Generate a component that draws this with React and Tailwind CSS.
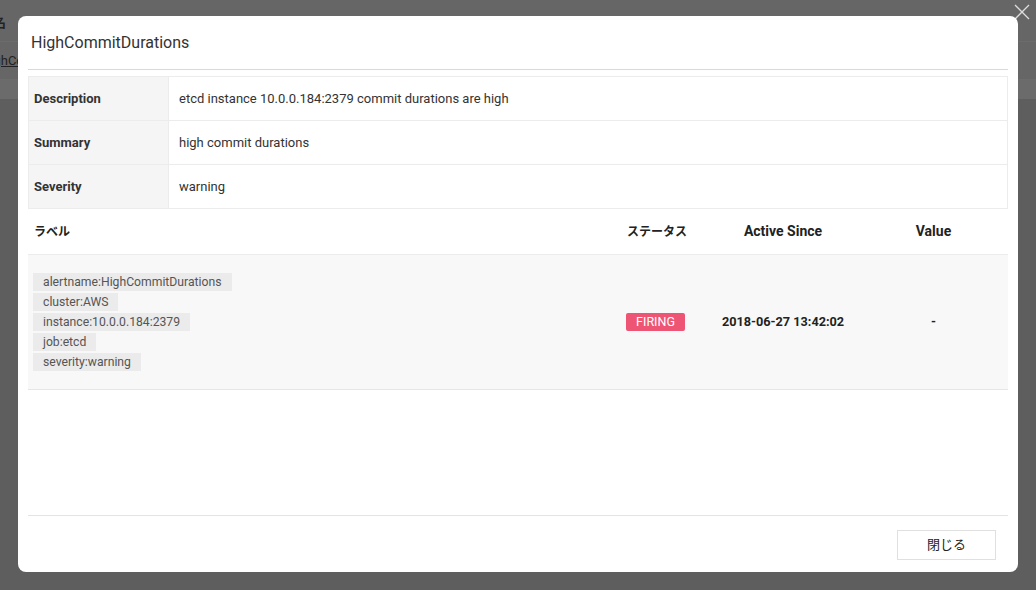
import React from "react";

const details = [
  { name: "Description", value: "etcd instance 10.0.0.184:2379 commit durations are high" },
  { name: "Summary", value: "high commit durations" },
  { name: "Severity", value: "warning" },
];

const labels = [
  "alertname:HighCommitDurations",
  "cluster:AWS",
  "instance:10.0.0.184:2379",
  "job:etcd",
  "severity:warning",
];

const jp = { fontFamily: 'Roboto, "Noto Sans CJK JP", sans-serif' };

export default function App() {
  return (
    <div className="relative w-[1036px] h-[590px] overflow-hidden bg-[#5e5e5e]" style={jp}>
      {/* page behind the dim overlay */}
      <div className="bg-[#666666]">
        <div className="h-[42px] border-b border-[#6c6c6c] flex items-end pb-[9px] text-[13px] font-bold text-[#222]">
          <span className="w-[230px] -ml-[7px]">名</span>
          <span className="w-[110px]">ラベル</span>
          <span className="w-[110px]">発生時刻</span>
          <span>状態</span>
        </div>
        <div className="h-[38px] border-b border-[#6c6c6c] flex items-center text-[13px] text-[#222]">
          <span className="underline -ml-[19px]">HighCommitDurations</span>
        </div>
        <div className="h-[19px] bg-[#6b6b6b]" />
      </div>

      <button className="absolute top-[3px] right-[5px] w-[18px] h-[18px] text-[#ddd]">
        <svg viewBox="0 0 18 18" className="w-[18px] h-[18px]" fill="none" stroke="currentColor" strokeWidth="1.3">
          <path d="M2 2 L16 16 M16 2 L2 16" />
        </svg>
      </button>

      {/* modal */}
      <div className="absolute left-[18px] top-[16px] w-[1000px] h-[556px] bg-white rounded-[8px] flex flex-col">
        <div className="mx-[10px] h-[54px] border-b border-[#d9d9d9] flex items-center pl-[3px] pt-[1px]">
          <h2 className="text-[16px] text-[#333]">HighCommitDurations</h2>
        </div>

        <div className="mx-[10px] mt-[6px] border border-[#ececec]">
          {details.map((d, i) => (
            <div key={d.name} className={`flex ${i > 0 ? "h-[44px] border-t border-[#ececec]" : "h-[43px]"}`}>
              <div className="w-[140px] bg-[#f5f5f5] border-r border-[#ececec] flex items-center pl-[5px] text-[13px] font-bold text-[#333]">
                {d.name}
              </div>
              <div className="flex-1 flex items-center pl-[10px] text-[13px] text-[#333]">{d.value}</div>
            </div>
          ))}
        </div>

        <div className="mx-[10px]">
          <div className="flex h-[46px] items-center border-b border-[#ececec] font-bold text-[#222]">
            <div className="flex-1 pl-[6px] text-[12px]">ラベル</div>
            <div className="w-[100px] text-center text-[12px]">ステータス</div>
            <div className="w-[152px] text-center text-[14px]">Active Since</div>
            <div className="w-[149px] text-center text-[14px]">Value</div>
          </div>
          <div className="flex h-[135px] items-center bg-[#f8f8f8] border-b border-[#e6e6e6]">
            <div className="flex-1 pl-[5px] flex flex-col items-start gap-[2px]">
              {labels.map((l) => (
                <span key={l} className="bg-[#ebebeb] h-[18px] leading-[18px] px-[10px] text-[12.2px] text-[#555]">
                  {l}
                </span>
              ))}
            </div>
            <div className="w-[100px] flex justify-center pr-[3px]">
              <span className="bg-[#ee5473] text-white text-[12.5px] h-[18px] leading-[18px] px-[10px] rounded-[2px]">
                FIRING
              </span>
            </div>
            <div className="w-[152px] text-center text-[12.7px] font-bold text-[#222]">2018-06-27 13:42:02</div>
            <div className="w-[149px] text-center text-[12.7px] font-bold text-[#222]">-</div>
          </div>
        </div>

        <div className="flex-1" />

        <div className="mx-[10px] h-[57px] border-t border-[#e3e3e3] flex items-center justify-end pr-[12px] pt-[1px]">
          <button className="w-[99px] h-[30px] border border-[#e0e0e0] bg-white text-[13px] text-[#222]">
            閉じる
          </button>
        </div>
      </div>
    </div>
  );
}
